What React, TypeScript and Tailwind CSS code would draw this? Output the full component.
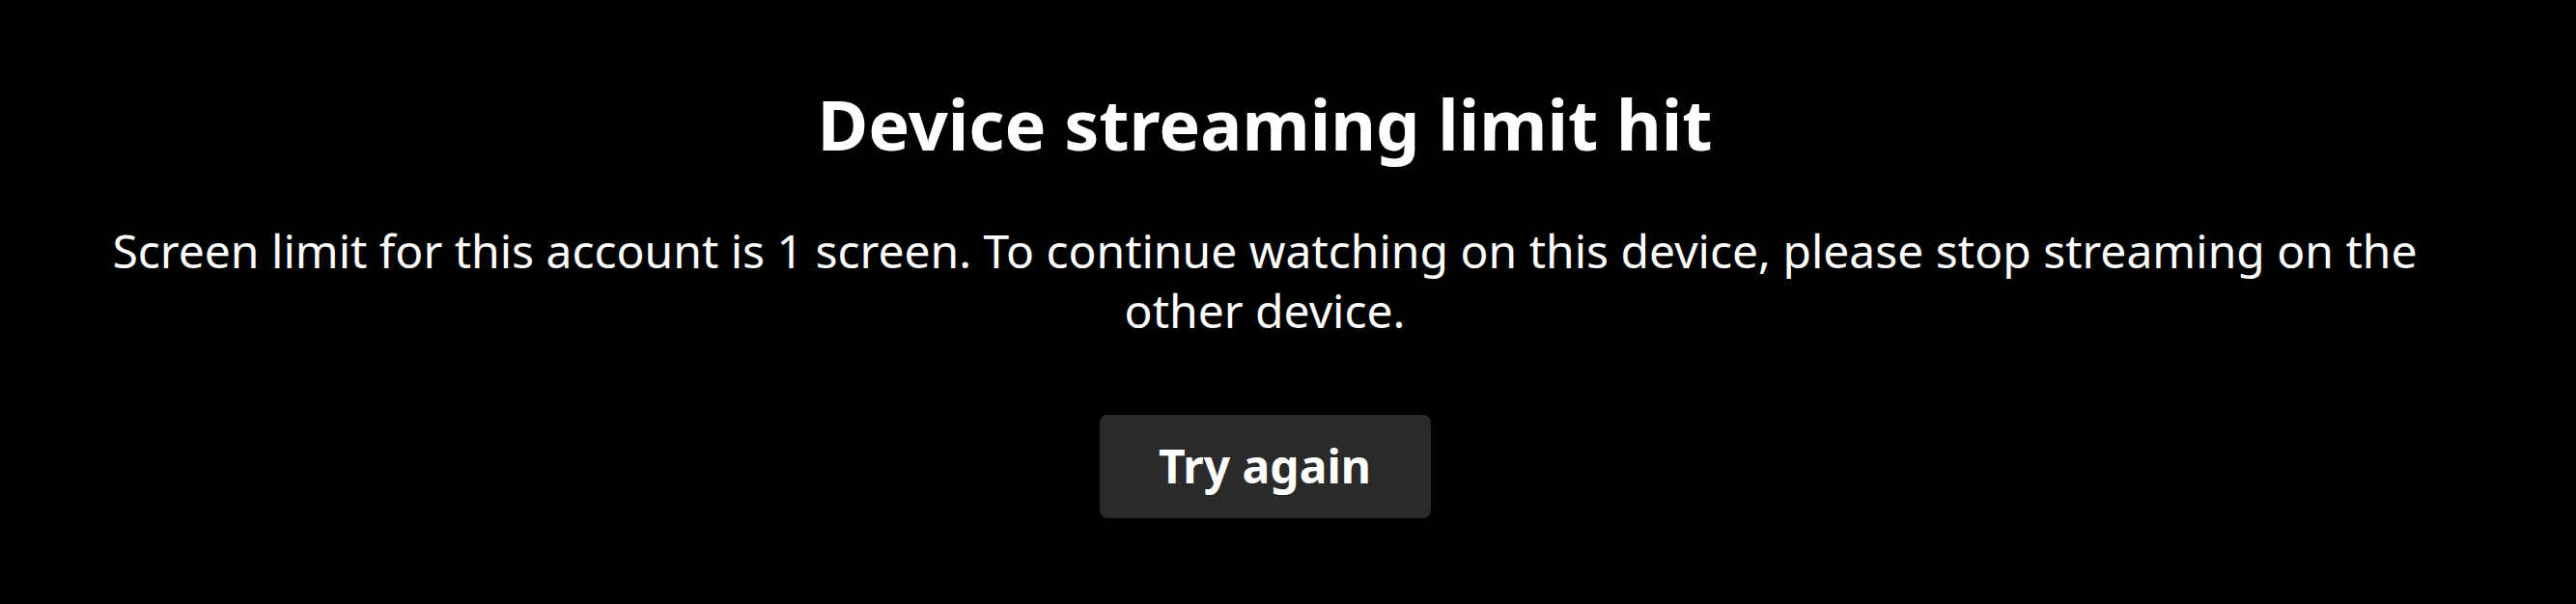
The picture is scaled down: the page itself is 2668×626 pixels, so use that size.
import React from "react";

export default function App() {
  return (
    <div
      className="min-h-[626px] w-full bg-black text-white pr-[48px] pt-[85px]"
      style={{ fontFamily: '"Noto Sans", "Open Sans", sans-serif' }}
    >
      <div className="flex flex-col items-center text-center">
        <h1 className="text-[72px] leading-[86.4px] font-bold">Device streaming limit hit</h1>
        <p className="mt-[57.6px] max-w-[2440px] text-[48px] leading-[62.4px] font-normal">
          Screen limit for this account is 1 screen. To continue watching on this device, please stop streaming on the other device.
        </p>
        <button className="mt-[76px] h-[107px] w-[343px] rounded-[8px] bg-[#2a2a2a] text-[48px] leading-[62.4px] font-bold text-white flex items-center justify-center">
          Try again
        </button>
      </div>
    </div>
  );
}
